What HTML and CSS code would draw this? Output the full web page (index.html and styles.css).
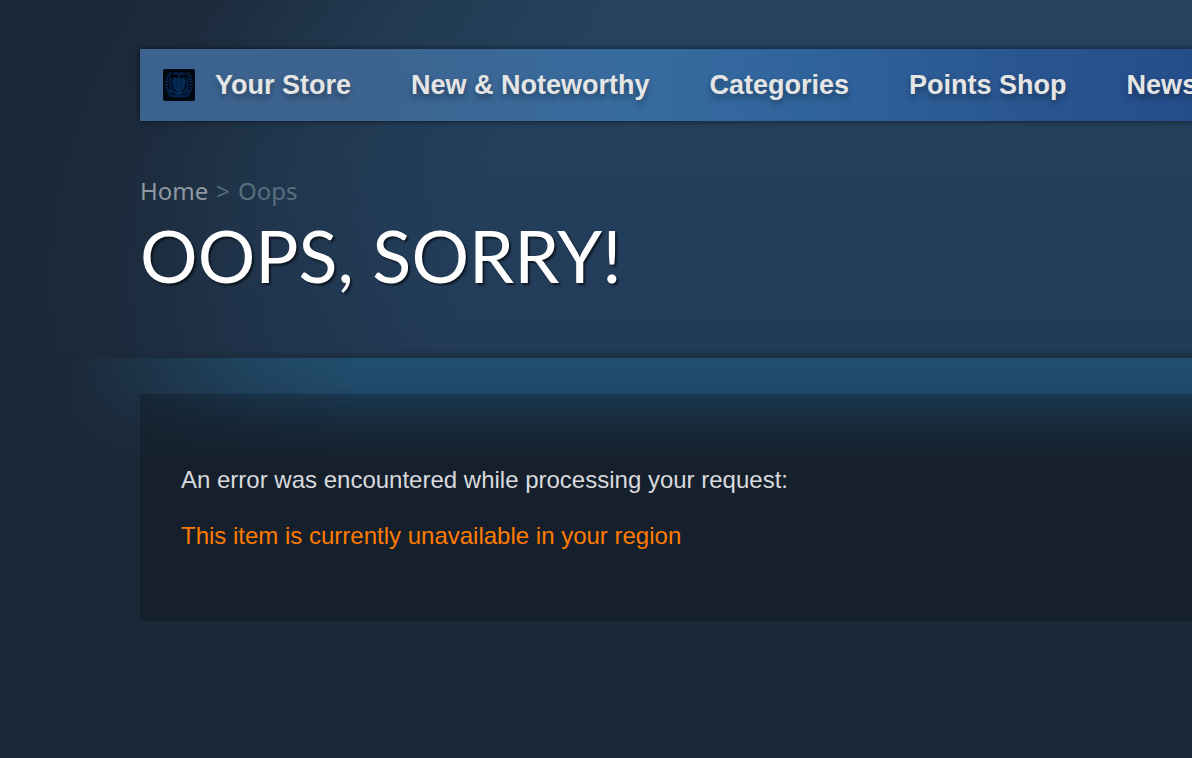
FILE: index.html
```html
<!DOCTYPE html>
<html lang="en">
<head>
  <meta charset="UTF-8" />
  <meta name="viewport" content="width=device-width, initial-scale=1.0" />
  <title>Oops, sorry!</title>
  <link rel="stylesheet" href="styles.css">
</head>
<body>
  <header class="page-header">
    <nav class="store-nav">
      <a class="nav-item" href="#">
        <svg class="avatar" viewBox="0 0 32 32" aria-hidden="true">
          <rect width="32" height="32" rx="2" fill="#020811" />
          <g fill="none" stroke="#05234a">
            <path d="M8 4C2 9 2 22 9 27M24 4c6 5 6 18-1 23" stroke-width="3" stroke-dasharray="2 1" />
            <path d="M6 26c4 3 6-1 10 2 4-3 6 1 10-2M5 21l6 3M27 21l-6 3" stroke-width="2" />
            <path d="M10 5l4-1 2 2 2-2 4 1" stroke-width="2" />
            <path d="M8 9c-2 6-1 11 4 15M24 9c2 6 1 11-4 15" stroke-width="2" />
          </g>
          <path d="M11 8l3 2 2-3 2 3 3-2 2 5-2 7-3 2h-4l-3-2-2-7z" fill="#052a55" />
          <path d="M12 24h8M16 20v6" stroke="#052a55" stroke-width="3" fill="none" />
          <path d="M14 12v6M18 12v6" stroke="#031c3c" fill="none" />
        </svg>
        Your Store
      </a>
      <a class="nav-item" href="#">New &amp; Noteworthy</a>
      <a class="nav-item" href="#">Categories</a>
      <a class="nav-item" href="#">Points Shop</a>
      <a class="nav-item" href="#">News</a>
    </nav>
    <div class="breadcrumbs"><a href="#">Home</a><span>&gt;</span><span>Oops</span></div>
    <h1>OOPS, SORRY!</h1>
  </header>
  <main class="page-content">
    <section class="error-box">
      <p>An error was encountered while processing your request:</p>
      <p class="error">This item is currently unavailable in your region</p>
    </section>
  </main>
</body>
</html>
```
FILE: styles.css
```css
* {
  box-sizing: border-box;
}
body {
  margin: 0;
  min-height: 100vh;
  background: #1b2838;
  color: #d9dadd;
  font-family: Arial, "Liberation Sans", sans-serif;
  font-size: 24px;
  line-height: 28px;
  overflow-x: hidden;
}
.page-header {
  padding: 49px 0 63px 140px;
  background:
    linear-gradient(to top, rgba(27, 40, 56, 0.7), rgba(27, 40, 56, 0) 9px),
    radial-gradient(ellipse 1180px 750px at 100% 300px, rgba(27, 40, 56, 0) 62%, rgba(27, 40, 56, 0.35) 78%, rgba(27, 40, 56, 0.85) 91%, #1b2838),
    linear-gradient(to bottom, #25435f, #223b58);
}
.store-nav {
  display: flex;
  align-items: center;
  height: 72px;
  padding-left: 23px;
  gap: 60px;
  overflow: hidden;
  background: linear-gradient(to right, #3c6390, #3d6490 23%, #376c9f 47%, #2f629b 66%, #29558f 85%, #264d8b);
  box-shadow: 0 0 6px rgba(0, 0, 0, 0.6);
}
.nav-item {
  display: flex;
  align-items: center;
  flex-shrink: 0;
  gap: 20px;
  color: #e5e5e5;
  font-size: 27px;
  font-weight: bold;
  text-decoration: none;
  text-shadow: 0 4px 6px rgba(0, 0, 0, 0.35);
}
.avatar {
  width: 32px;
  height: 32px;
}
.breadcrumbs {
  display: flex;
  gap: 8px;
  margin-top: 56px;
  color: #56707f;
  font-family: "Noto Sans", "Open Sans", sans-serif;
  font-size: 24px;
}
.breadcrumbs a {
  color: #8f98a0;
  text-decoration: none;
}
h1 {
  margin: 10px 0 0;
  color: #fff;
  font-family: Lato, "Open Sans", sans-serif;
  font-size: 72px;
  font-weight: 400;
  line-height: 80px;
  text-shadow: 2px 2px 2px rgba(0, 0, 0, 0.6);
}
.page-content {
  padding: 36px 0 60px 140px;
  background:
    linear-gradient(to right, #1b2838 60px, rgba(27, 40, 56, 0.7) 140px, rgba(27, 40, 56, 0.3) 240px, rgba(27, 40, 56, 0) 360px),
    linear-gradient(to bottom, #21506f, #214a6a 28px, rgba(33, 74, 106, 0.35) 68px, rgba(27, 40, 56, 0) 104px);
}
.error-box {
  padding: 72px 41px 71px;
  background: rgba(0, 0, 0, 0.2);
}
.error-box p {
  margin: 0 0 28px;
}
.error-box .error {
  margin: 0;
  color: #ff7b00;
}
```
